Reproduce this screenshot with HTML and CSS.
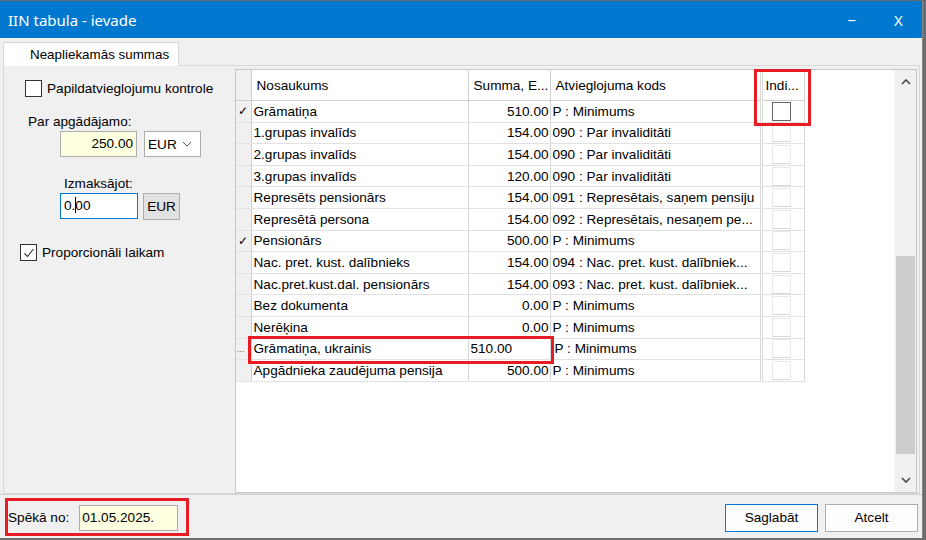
FILE: index.html
```html
<!DOCTYPE html>
<html lang="lv">
<head>
    <meta charset="UTF-8">
    <meta name="viewport" content="width=device-width, initial-scale=1.0">
    <link rel="stylesheet" href="styles.css">
    <title>IIN tabula - ievade</title>
</head>
<body>
<div class="window">
    <div class="titlebar">
        <span class="title">IIN tabula - ievade</span>
        <div class="win-buttons">
            <span class="win-btn">&minus;</span>
            <span class="win-btn">X</span>
        </div>
    </div>

    <div class="tabs">
        <div class="tab active">Neapliekamās summas</div>
    </div>

    <div class="tabpanel">
        <div class="left-panel">
            <label class="check-row first">
                <span class="checkbox"></span>
                <span>Papildatvieglojumu kontrole</span>
            </label>

            <div class="field-label">Par apgādājamo:</div>
            <div class="input-row indent">
                <div class="input yellow right">250.00</div>
                <div class="select">EUR
                    <svg width="10" height="6" viewBox="0 0 10 6"><path d="M1 1 L5 5 L9 1" fill="none" stroke="#555" stroke-width="1"/></svg>
                </div>
            </div>

            <div class="field-label indent sub">Izmaksājot:</div>
            <div class="input-row indent">
                <div class="input focused">0.<span class="caret"></span>00</div>
                <div class="btn-small">EUR</div>
            </div>

            <label class="check-row last">
                <span class="checkbox checked">
                    <svg width="12" height="12" viewBox="0 0 12 12"><path d="M1.5 6.5 L4.5 9.5 L10.5 2" fill="none" stroke="#333" stroke-width="1.1"/></svg>
                </span>
                <span>Proporcionāli laikam</span>
            </label>
        </div>

        <div class="grid-wrap">
            <div class="grid-area">
                <table class="grid">
                    <colgroup>
                        <col class="w-ind">
                        <col class="w-name">
                        <col class="w-sum">
                        <col class="w-code">
                        <col class="w-indi">
                    </colgroup>
                    <thead>
                    <tr>
                        <th class="ind"></th>
                        <th>Nosaukums</th>
                        <th>Summa, E...</th>
                        <th>Atvieglojuma kods</th>
                        <th class="c-ind">Indi...</th>
                    </tr>
                    </thead>
                    <tbody>
                    <tr><td class="ind">&#10003;</td><td>Grāmatiņa</td><td class="num">510.00</td><td>P : Minimums</td><td class="c-ind"><span class="cb dark"></span></td></tr>
                    <tr><td class="ind"></td><td>1.grupas invalīds</td><td class="num">154.00</td><td>090 : Par invaliditāti</td><td class="c-ind"><span class="cb"></span></td></tr>
                    <tr><td class="ind"></td><td>2.grupas invalīds</td><td class="num">154.00</td><td>090 : Par invaliditāti</td><td class="c-ind"><span class="cb"></span></td></tr>
                    <tr><td class="ind"></td><td>3.grupas invalīds</td><td class="num">120.00</td><td>090 : Par invaliditāti</td><td class="c-ind"><span class="cb"></span></td></tr>
                    <tr><td class="ind"></td><td>Represēts pensionārs</td><td class="num">154.00</td><td>091 : Represētais, saņem pensiju</td><td class="c-ind"><span class="cb"></span></td></tr>
                    <tr><td class="ind"></td><td>Represētā persona</td><td class="num">154.00</td><td>092 : Represētais, nesaņem pe...</td><td class="c-ind"><span class="cb"></span></td></tr>
                    <tr><td class="ind">&#10003;</td><td>Pensionārs</td><td class="num">500.00</td><td>P : Minimums</td><td class="c-ind"><span class="cb"></span></td></tr>
                    <tr><td class="ind"></td><td>Nac. pret. kust. dalībnieks</td><td class="num">154.00</td><td>094 : Nac. pret. kust. dalībniek...</td><td class="c-ind"><span class="cb"></span></td></tr>
                    <tr><td class="ind"></td><td>Nac.pret.kust.dal. pensionārs</td><td class="num">154.00</td><td>093 : Nac. pret. kust. dalībniek...</td><td class="c-ind"><span class="cb"></span></td></tr>
                    <tr><td class="ind"></td><td>Bez dokumenta</td><td class="num">0.00</td><td>P : Minimums</td><td class="c-ind"><span class="cb"></span></td></tr>
                    <tr><td class="ind"></td><td>Nerēķina</td><td class="num">0.00</td><td>P : Minimums</td><td class="c-ind"><span class="cb"></span></td></tr>
                    <tr class="editing"><td class="ind dots">...</td><td>Grāmatiņa, ukrainis</td><td class="edit-sum">510.00</td><td class="shift">P : Minimums</td><td class="c-ind"><span class="cb"></span></td></tr>
                    <tr><td class="ind"></td><td>Apgādnieka zaudējuma pensija</td><td class="num">500.00</td><td>P : Minimums</td><td class="c-ind"><span class="cb"></span></td></tr>
                    </tbody>
                </table>
            </div>
            <div class="scrollbar">
                <div class="sb-arrow">
                    <svg width="10" height="6" viewBox="0 0 10 6"><path d="M1 5 L5 1 L9 5" fill="none" stroke="#444" stroke-width="1.6"/></svg>
                </div>
                <div class="sb-track">
                    <div class="sb-thumb"></div>
                </div>
                <div class="sb-arrow">
                    <svg width="10" height="6" viewBox="0 0 10 6"><path d="M1 1 L5 5 L9 1" fill="none" stroke="#444" stroke-width="1.6"/></svg>
                </div>
            </div>
        </div>
    </div>

    <div class="footer">
        <div class="date-field">
            <span>Spēkā no:</span>
            <div class="input yellow date">01.05.2025.</div>
        </div>
        <div class="buttons">
            <button class="btn default">Saglabāt</button>
            <button class="btn">Atcelt</button>
        </div>
    </div>

    <!-- annotation frames -->
    <div class="mark mark-indi"></div>
    <div class="mark mark-row"></div>
    <div class="mark mark-date"></div>
</div>
</body>
</html>
```

FILE: styles.css
```css
body, html {
    margin: 0;
    padding: 0;
    background: #6d6d6d;
}

.window {
    position: relative;
    width: 922px;
    height: 537px;
    margin-top: 1px;
    background: #f0f0f0;
    display: flex;
    flex-direction: column;
    font-family: "Liberation Sans", Arial, sans-serif;
    font-size: 13.6px;
    color: #000;
    border-right: 1px solid #888;
}

.titlebar {
    height: 37px;
    background: #0078d0;
    color: #fff;
    display: flex;
    align-items: center;
    justify-content: space-between;
    padding-left: 8px;
}

.title {
    font-family: "Noto Sans", sans-serif;
    font-size: 15px;
}

.win-buttons {
    display: flex;
}

.win-btn {
    width: 47px;
    text-align: center;
    font-family: "Noto Sans", sans-serif;
    font-size: 15px;
}

.tabs {
    height: 27px;
    display: flex;
    align-items: flex-end;
    padding-left: 3px;
}

.tab {
    height: 24px;
    line-height: 23px;
    padding: 0 9px 0 26px;
    box-sizing: border-box;
    background: #fff;
    border: 1px solid #d9d9d9;
    border-bottom: none;
    margin-bottom: -1px;
    position: relative;
    z-index: 1;
    font-size: 13.4px;
}

.tabpanel {
    height: 424px;
    margin: 0 2px 0 3px;
    border: 1px solid #d9d9d9;
    display: flex;
    padding: 3px 0 0 0;
}

.left-panel {
    width: 231px;
    flex-shrink: 0;
}

.check-row {
    display: flex;
    align-items: center;
    gap: 5px;
}

.check-row.first {
    margin: 11px 0 0 21px;
}

.check-row.last {
    margin: 24px 0 0 16px;
}

.checkbox {
    width: 15px;
    height: 15px;
    border: 1px solid #333;
    background: #fff;
    display: flex;
    align-items: center;
    justify-content: center;
}

.field-label {
    margin: 17px 0 0 24px;
}

.field-label.indent {
    margin-left: 60px;
}

.field-label.sub {
    margin-top: 19px;
}

.input-row {
    display: flex;
    gap: 7px;
    margin-top: 2px;
}

.input-row.indent {
    margin-left: 56px;
}

.input {
    height: 26px;
    box-sizing: border-box;
    border: 1px solid #adadad;
    background: #fff;
    width: 77px;
    padding: 0 3px;
    line-height: 24px;
}

.input.yellow {
    background: #ffffe1;
}

.input.right {
    text-align: right;
}

.input.focused {
    border-color: #0078d7;
    width: 78px;
}

.caret {
    display: inline-block;
    width: 1px;
    height: 16px;
    background: #000;
    vertical-align: -3px;
    margin-right: -1px;
}

.select {
    height: 26px;
    width: 57px;
    box-sizing: border-box;
    border: 1px solid #adadad;
    background: #fff;
    display: flex;
    align-items: center;
    justify-content: space-between;
    padding: 0 8px 0 3px;
}

.btn-small {
    height: 27px;
    width: 37px;
    box-sizing: border-box;
    border: 1px solid #adadad;
    background: #e1e1e1;
    display: flex;
    align-items: center;
    justify-content: center;
    margin-left: -2px;
}

.grid-wrap {
    flex: 1;
    display: flex;
    background: #fff;
    border: 1px solid #c8c8c8;
    margin-right: 2px;
}

.grid-area {
    flex: 1;
}

.grid {
    border-collapse: collapse;
    table-layout: fixed;
    width: 568px;
}

.w-ind { width: 15px; }
.w-name { width: 217px; }
.w-sum { width: 82px; }
.w-code { width: 211px; }
.w-indi { width: 43px; }

.grid th {
    height: 30px;
    font-weight: normal;
    text-align: left;
    padding: 0 3px 0 5px;
    border-right: 1px solid #cfcfcf;
    border-bottom: 1px solid #cfcfcf;
    white-space: nowrap;
    overflow: hidden;
}

.grid td {
    height: 20.6px;
    padding: 0 2px 0 2px;
    border-right: 1px solid #d6d6d6;
    border-bottom: 1px solid #e2e2e2;
    white-space: nowrap;
    overflow: hidden;
}

.grid .ind {
    background: #f0f0f0;
    border-right: 1px solid #cfcfcf;
    font-size: 12px;
    text-align: center;
    padding: 0;
}

.grid .dots {
    font-size: 9px;
    text-align: left;
    padding: 0 0 0 1px;
    color: #666;
}

.grid td.num {
    text-align: right;
    padding-right: 1px;
}

.grid td.edit-sum {
    text-align: left;
    padding-left: 2px;
}

.grid td.shift {
    padding-left: 4px;
}

.grid .c-ind {
    border-left: 3px double #dadada;
    padding: 0;
}

.grid th.c-ind {
    padding: 0 0 0 3px;
}

.cb {
    display: block;
    width: 17px;
    height: 17px;
    margin: 0 0 0 9px;
    border: 1px solid #e8e8e8;
    border-bottom-color: #d8d8d8;
}

.cb.dark {
    border: 1px solid #666;
}

.scrollbar {
    width: 21px;
    background: #f0f0f0;
    display: flex;
    flex-direction: column;
    border-left: 1px solid #f7f7f7;
}

.sb-arrow {
    height: 24px;
    display: flex;
    align-items: center;
    justify-content: center;
}

.sb-track {
    flex: 1;
    display: flex;
    flex-direction: column;
    justify-content: flex-end;
    padding-bottom: 14px;
}

.sb-thumb {
    height: 198px;
    background: #cdcdcd;
    margin: 0 1px 0 1px;
}

.footer {
    flex: 1;
    display: flex;
    align-items: center;
    justify-content: space-between;
    padding: 0 4px 0 8px;
    border-top: 1px solid #d0d0d0;
}

.date-field {
    display: flex;
    align-items: center;
    gap: 10px;
    margin-top: 2px;
}

.input.date {
    width: 99px;
    padding-left: 2px;
}

.buttons {
    display: flex;
    gap: 7px;
    margin-top: 2px;
}

.btn {
    width: 93px;
    height: 28px;
    font-family: "Liberation Sans", Arial, sans-serif;
    font-size: 13.6px;
    background: #fdfdfd;
    border: 1px solid #adadad;
    color: #000;
}

.btn.default {
    border-color: #0078d7;
}

.mark {
    position: absolute;
    border: 3px solid #e81c24;
    box-sizing: border-box;
}

.mark-indi {
    left: 754px;
    top: 68px;
    width: 57px;
    height: 57px;
}

.mark-row {
    left: 248px;
    top: 335px;
    width: 306px;
    height: 28px;
}

.mark-date {
    left: 5px;
    top: 497px;
    width: 184px;
    height: 38px;
}
```
